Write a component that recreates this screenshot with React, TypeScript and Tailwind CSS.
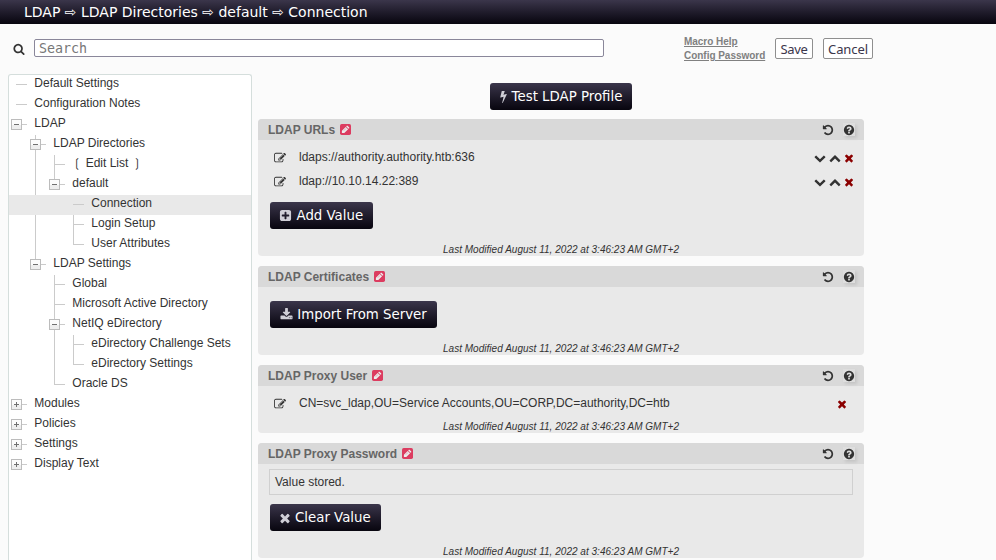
import React from 'react';

const PATHS = {
  search:
    'M1216 832q0-185-131.5-316.5t-316.5-131.5-316.5 131.5-131.5 316.5 131.5 316.5 316.5 131.5 316.5-131.5 131.5-316.5zm512 832q0 52-38 90t-90 38q-54 0-90-38l-343-342q-179 124-399 124-143 0-273.5-55.5t-225-150-150-225-55.5-273.5 55.5-273.5 150-225 225-150 273.5-55.5 273.5 55.5 225 150 150 225 55.5 273.5q0 220-124 399l343 343q37 37 37 90z',
  help:
    'M1024 1376v-192q0-14-9-23t-23-9h-192q-14 0-23 9t-9 23v192q0 14 9 23t23 9h192q14 0 23-9t9-23zm256-672q0-88-55.5-163t-138.5-116-170-41q-243 0-371 213-15 24 8 42l132 100q7 6 19 6 16 0 25-12 53-68 86-92 34-24 86-24 48 0 85.5 26t37.5 59q0 38-20 61t-68 45q-63 28-115.5 86.5t-52.5 125.5v36q0 14 9 23t23 9h192q14 0 23-9t9-23q0-19 21.5-49.5t54.5-49.5q32-18 49-28.5t46-35 44.5-48 28-60.5 12.5-81zm384 192q0 209-103 385.5t-279.5 279.5-385.5 103-385.5-103-279.5-279.5-103-385.5 103-385.5 279.5-279.5 385.5-103 385.5 103 279.5 279.5 103 385.5z',
  times:
    'M1490 1322q0 40-28 68l-136 136q-28 28-68 28t-68-28l-294-294-294 294q-28 28-68 28t-68-28l-136-136q-28-28-28-68t28-68l294-294-294-294q-28-28-28-68t28-68l136-136q28-28 68-28t68 28l294 294 294-294q28-28 68-28t68 28l136 136q28 28 28 68t-28 68l-294 294 294 294q28 28 28 68z',
  undo:
    'M1664 896q0 156-61 298t-164 245-245 164-298 61q-172 0-327-72.5t-264-204.5q-7-10-6.5-22.5t8.5-20.5l137-138q10-9 25-9 16 2 23 12 73 95 179 147t225 52q104 0 198.5-40.5t163.5-109.5 109.5-163.5 40.5-198.5-40.5-198.5-109.5-163.5-163.5-109.5-198.5-40.5q-98 0-188 35.5t-160 101.5l137 138q31 30 14 69-17 40-59 40h-448q-26 0-45-19t-19-45v-448q0-42 40-59 39-17 69 14l130 129q107-101 244.5-156.5t284.5-55.5q156 0 298 61t245 164 164 245 61 298z',
  plus:
    'M1408 960v-128q0-26-19-45t-45-19h-320v-320q0-26-19-45t-45-19h-128q-26 0-45 19t-19 45v320h-320q-26 0-45 19t-19 45v128q0 26 19 45t45 19h320v320q0 26 19 45t45 19h128q26 0 45-19t19-45v-320h320q26 0 45-19t19-45zm256-544v960q0 119-84.5 203.5t-203.5 84.5h-960q-119 0-203.5-84.5t-84.5-203.5v-960q0-119 84.5-203.5t203.5-84.5h960q119 0 203.5 84.5t84.5 203.5z',
  bolt:
    'M1333 566q18 20 7 44l-540 1157q-13 25-42 25-4 0-14-2-17-5-25.5-19t-4.5-30l197-808-406 101q-4 1-12 1-18 0-31-11-18-15-13-39l201-825q4-14 16-23t28-9h328q19 0 32 12.5t13 29.5q0 8-5 18l-171 463 396-98q8-2 12-2 19 0 34 15z',
  download:
    'M1344 1344q0-26-19-45t-45-19-45 19-19 45 19 45 45 19 45-19 19-45zm256 0q0-26-19-45t-45-19-45 19-19 45 19 45 45 19 45-19 19-45zm128-224v320q0 40-28 68t-68 28h-1472q-40 0-68-28t-28-68v-320q0-40 28-68t68-28h465l135 136q58 56 136 56t136-56l136-136h464q40 0 68 28t28 68zm-325-569q17 41-14 70l-448 448q-18 19-45 19t-45-19l-448-448q-31-29-14-70 17-39 59-39h256v-448q0-26 19-45t45-19h256q26 0 45 19t19 45v448h256q42 0 59 39z',
  down:
    'M1683 808l-742 741q-19 19-45 19t-45-19l-742-741q-19-19-19-45.5t19-45.5l166-165q19-19 45-19t45 19l531 531 531-531q19-19 45-19t45 19l166 165q19 19 19 45.5t-19 45.5z',
  up:
    'M1683 1331l-166 165q-19 19-45 19t-45-19l-531-531-531 531q-19 19-45 19t-45-19l-166-165q-19-19-19-45.5t19-45.5l742-741q19-19 45-19t45 19l742 741q19 19 19 45.5t-19 45.5z',
  edit:
    'M888 1184l116-116-152-152-116 116v56h96v96h56zm440-720q-16-16-33 1l-350 350q-17 17-1 33t33-1l350-350q17-17 1-33zm80 594v190q0 119-84.5 203.5t-203.5 84.5h-832q-119 0-203.5-84.5t-84.5-203.5v-832q0-119 84.5-203.5t203.5-84.5h832q63 0 117 25 15 7 18 23 3 17-9 29l-49 49q-14 14-32 8-23-6-45-6h-832q-66 0-113 47t-47 113v832q0 66 47 113t113 47h832q66 0 113-47t47-113v-126q0-13 9-22l64-64q15-15 35-7t20 29zm-96-738l288 288-672 672h-288v-288zm444 132l-92 92-288-288 92-92q28-28 68-28t68 28l152 152q28 28 28 68t-28 68z',
};

function Icon({ name, className }: { name: keyof typeof PATHS; className: string }) {
  return (
    <svg viewBox="0 0 1792 1792" fill="currentColor" className={'shrink-0 overflow-visible ' + className}>
      <path d={PATHS[name]} />
    </svg>
  );
}

function PencilSquare() {
  return (
    <svg viewBox="0 0 11 11" className="ml-[5px] h-[11px] w-[11px] shrink-0">
      <rect width="11" height="11" rx="1.7" fill="#dc3c60" />
      <path d="M1.9 9.1V6.7L5.7 2.9L8.1 5.3L4.3 9.1ZM6.2 2.4L6.8 1.8Q7.2 1.5 7.6 1.8L9.2 3.4Q9.5 3.8 9.2 4.2L8.6 4.8Z" fill="#ececec" />
      <path d="M3.8 6.7L6.2 4.3" stroke="#dc3c60" strokeWidth=".4" />
    </svg>
  );
}

/* Guide cells: ' ' empty, '|' line, 't' tee, 'l' last, '-' dash only,
   'm' root minus, 'p' root plus, 'M' minus with lines, 'E' minus closing a branch */
const TREE: [string, string][] = [
  ['-', 'Default Settings'],
  ['-', 'Configuration Notes'],
  ['m', 'LDAP'],
  [' M', 'LDAP Directories'],
  [' |t', '❲ Edit List ❳'],
  [' |E', 'default'],
  ['   -', 'Connection'],
  [' | t', 'Login Setup'],
  [' | l', 'User Attributes'],
  [' E', 'LDAP Settings'],
  ['  t', 'Global'],
  ['  t', 'Microsoft Active Directory'],
  ['  M', 'NetIQ eDirectory'],
  ['  |t', 'eDirectory Challenge Sets'],
  ['  |l', 'eDirectory Settings'],
  ['  l', 'Oracle DS'],
  ['p', 'Modules'],
  ['p', 'Policies'],
  ['p', 'Settings'],
  ['p', 'Display Text'],
];

function Guide({ kind }: { kind: string }) {
  const box = 'mpME'.includes(kind);
  const line = '|tM'.includes(kind) ? 20 : 'lE'.includes(kind) ? 10 : 0;
  return (
    <svg width="19" height="20" className="shrink-0" shapeRendering="crispEdges">
      {line > 0 && <rect x="7" y="0" width="1" height={line} fill="#cbcbcb" />}
      {kind !== ' ' && kind !== '|' && <rect x="7" y="9" width="11" height="1" fill="#cbcbcb" />}
      {box && (
        <>
          <rect x="2" y="4" width="11" height="11" fill="#bcbcbc" />
          <rect x="3" y="5" width="9" height="5" fill="#fcfcfc" />
          <rect x="3" y="10" width="9" height="4" fill="#eeeeee" />
          <rect x="5" y="9" width="5" height="1" fill="#707070" />
          {kind === 'p' && <rect x="7" y="7" width="1" height="5" fill="#707070" />}
        </>
      )}
    </svg>
  );
}

function DarkButton({ icon, iconClass, className, children }: { icon: keyof typeof PATHS; iconClass: string; className: string; children: React.ReactNode }) {
  return (
    <button
      className={
        "flex h-[27px] items-center rounded-[3px] bg-linear-to-b from-[#3b364b] to-[#08060f] font-['DejaVu_Sans',sans-serif] text-[13.33px] leading-[27px] whitespace-nowrap text-white " +
        className
      }
    >
      <Icon name={icon} className={'text-[#cfced6] ' + iconClass} />
      {children}
    </button>
  );
}

function Panel({ title, className, children }: { title: string; className: string; children: React.ReactNode }) {
  return (
    <section className={'flex flex-col overflow-hidden rounded-[4px] bg-[#e9e9e9] ' + className}>
      <header className="flex h-[21px] shrink-0 items-center bg-[#d9d9d9] pr-[9px] pl-[10px]">
        <h2 className="pt-px text-[12px] leading-[20px] font-bold text-[#666]">{title}</h2>
        <PencilSquare />
        <Icon name="undo" className="mr-[9px] ml-auto h-[12px] w-[12px]" />
        <span className="flex h-[13px] w-[12px] items-center justify-center bg-[#dedede] shadow-[2px_2px_3px_#c4c4c4]">
          <Icon name="help" className="h-[12px] w-[12px]" />
        </span>
      </header>
      {children}
      <p className="mt-auto text-center text-[10px] leading-[13px] tracking-[0.02px] italic">Last Modified August 11, 2022 at 3:46:23 AM GMT+2</p>
    </section>
  );
}

function UrlRow({ children }: { children: string }) {
  return (
    <div className="flex h-[24px] items-center pr-[9px] pl-[16px]">
      <Icon name="edit" className="mt-[2px] h-[12px] w-[12px]" />
      <span className="ml-[13px]">{children}</span>
      <Icon name="down" className="mt-[2px] mr-[3px] ml-auto h-[12px] w-[12px]" />
      <Icon name="up" className="mt-[2px] mr-[2px] h-[12px] w-[12px]" />
      <Icon name="times" className="mt-[2px] h-[12px] w-[12px] text-[#8b0000]" />
    </div>
  );
}

export default function App() {
  return (
    <div className="flex h-[560px] w-[996px] flex-col overflow-hidden bg-[#fbfbfb] font-['Liberation_Sans',Arial,sans-serif] text-[12px] leading-[20px] text-[#333]">
      <div className="h-[24px] shrink-0 bg-linear-to-b from-[#3b364b] to-[#08060f] pl-[24px] font-['DejaVu_Sans',sans-serif] text-[14px] leading-[24px] whitespace-pre text-white">
        LDAP ⇨ LDAP Directories ⇨ default ⇨ Connection
      </div>

      <div className="flex h-[50px] shrink-0 items-start pl-[13px]">
        <Icon name="search" className="mt-[19px] h-[12px] w-[12px]" />
        <input
          placeholder="Search"
          className="mt-[15px] ml-[9px] h-[18px] w-[570px] rounded-[2px] border border-[#8a879a] bg-white px-[4px] font-['DejaVu_Sans_Mono',monospace] text-[13.33px] leading-[16px] placeholder:text-[#777]"
        />
        <div className="mt-[11px] ml-[80px] flex w-[91px] flex-col text-[10px] leading-[14px] font-bold tracking-[-0.03px] text-[#808080]">
          <a className="self-start underline">Macro Help</a>
          <a className="self-start underline">Config Password</a>
        </div>
        <button className="mt-[14px] h-[21px] w-[38px] rounded-[2px] border border-[#8f8f8f] bg-white font-['Noto_Sans',sans-serif] text-[13px] leading-[20px] tracking-[-0.3px] text-[#3b364b]">
          Save
        </button>
        <button className="mt-[14px] ml-[10px] h-[21px] w-[50px] rounded-[2px] border border-[#8f8f8f] bg-white font-['Noto_Sans',sans-serif] text-[13px] leading-[20px] tracking-[-0.1px] text-[#3b364b]">
          Cancel
        </button>
      </div>

      <div className="flex min-h-0 flex-1">
        <nav className="ml-[8px] w-[244px] shrink-0 rounded-t-[3px] border border-b-0 border-[#d5dedc] bg-white">
          {TREE.map(([guides, label]) => (
            <div key={label} className={'flex h-[20px] ' + (label === 'Connection' ? 'bg-[#e9e9e9]' : '')}>
              {guides.split('').map((kind, i) => (
                <Guide key={i} kind={kind} />
              ))}
              <span className="ml-[6.3px] leading-[17px] whitespace-pre">{label}</span>
            </div>
          ))}
        </nav>

        <main className="ml-[6px] flex w-[606px] shrink-0 flex-col">
          <DarkButton icon="bolt" iconClass="h-[13px] w-[13px] ml-[-3px] mr-[2px]" className="mt-[9px] mb-[9px] w-[142px] justify-center self-center">
            Test LDAP Profile
          </DarkButton>

          <Panel title="LDAP URLs" className="h-[137px] shrink-0">
            <div className="pt-[5px]">
              <UrlRow>ldaps://authority.authority.htb:636</UrlRow>
              <UrlRow>ldap://10.10.14.22:389</UrlRow>
            </div>
            <DarkButton icon="plus" iconClass="h-[13px] w-[13px] mr-[4.5px]" className="mt-[9px] ml-[12px] w-[103px] pl-[9px]">
              Add Value
            </DarkButton>
          </Panel>

          <Panel title="LDAP Certificates" className="mt-[10px] h-[89px] shrink-0">
            <DarkButton icon="download" iconClass="h-[13px] w-[13px] mr-[4px]" className="mt-[14px] ml-[12px] w-[167px] justify-center">
              Import From Server
            </DarkButton>
          </Panel>

          <Panel title="LDAP Proxy User" className="mt-[10px] h-[68px] shrink-0">
            <div className="mt-[5px] flex h-[24px] items-center pr-[16px] pl-[16px]">
              <Icon name="edit" className="mt-[2px] h-[12px] w-[12px]" />
              <span className="ml-[13px]">CN=svc_ldap,OU=Service Accounts,OU=CORP,DC=authority,DC=htb</span>
              <Icon name="times" className="mt-[2px] ml-auto h-[12px] w-[12px] text-[#8b0000]" />
            </div>
          </Panel>

          <Panel title="LDAP Proxy Password" className="mt-[10px] h-[115px] shrink-0">
            <div className="mx-[11px] mt-[5px] h-[26px] border border-[#d0d0d0] pl-[5px] leading-[24px]">Value stored.</div>
            <DarkButton icon="times" iconClass="h-[14px] w-[14px] mr-[3px]" className="mt-[9px] ml-[12px] w-[111px] pl-[8px]">
              Clear Value
            </DarkButton>
          </Panel>
        </main>
      </div>
    </div>
  );
}
